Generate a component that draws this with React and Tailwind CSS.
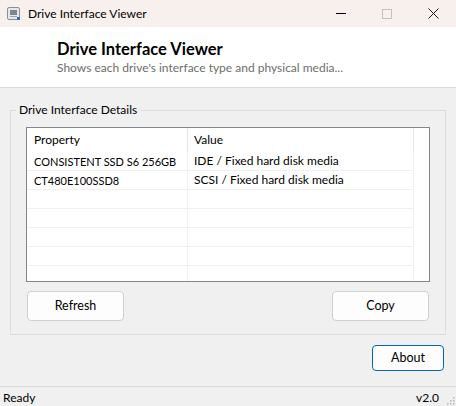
import React from 'react'

const FONT = { fontFamily: '"Segoe UI", Lato, "Noto Sans", sans-serif' }

const ROWS = [
  { prop: 'CONSISTENT SSD S6 256GB', value: 'IDE / Fixed hard disk media' },
  { prop: 'CT480E100SSD8', value: 'SCSI / Fixed hard disk media' },
  { prop: '', value: '' },
  { prop: '', value: '' },
  { prop: '', value: '' },
  { prop: '', value: '' },
  { prop: '', value: '' },
]

const AppIcon = () => (
  <svg width="14" height="14" viewBox="0 0 14 14">
    <rect x="0.5" y="0.5" width="12" height="12" rx="1.5" fill="#e4e6ea" stroke="#8a9099" />
    <rect x="3" y="3" width="7" height="5" fill="#7c8590" />
    <rect x="3" y="9" width="7" height="1" fill="#9aa2ab" />
    <rect x="10" y="10" width="3" height="3" fill="#2f6fc0" />
  </svg>
)

const SizeGrip = () => (
  <svg width="10" height="10" viewBox="0 0 10 10" className="absolute bottom-[1px] right-[1px]">
    {[
      [8, 2], [8, 5], [5, 5], [8, 8], [5, 8], [2, 8],
    ].map(([x, y], i) => (
      <rect key={i} x={x} y={y} width="1.5" height="1.5" fill="#b8b8b8" />
    ))}
  </svg>
)

const TitleBar = () => (
  <div className="flex h-[27px] items-center bg-[#f7f0ec] text-[12px] text-black">
    <div className="ml-[7px] mr-[7px] flex items-center">
      <AppIcon />
    </div>
    <span className="leading-none">Drive Interface Viewer</span>
    <div className="ml-auto flex h-full items-center">
      <div className="flex h-full w-[46px] items-center justify-center">
        <div className="h-px w-[10px] bg-black" />
      </div>
      <div className="flex h-full w-[46px] items-center justify-center">
        <div className="h-[10px] w-[10px] border border-[#c4c0be]" />
      </div>
      <div className="flex h-full w-[46px] items-center justify-center">
        <svg width="11" height="11" viewBox="0 0 11 11">
          <path d="M0.5 0.5 L10.5 10.5 M10.5 0.5 L0.5 10.5" stroke="#1a1a1a" strokeWidth="1" />
        </svg>
      </div>
    </div>
  </div>
)

const Header = () => (
  <div className="h-[61px] border-b border-[#dcdcdc] bg-white pl-[57px] pt-[12px]">
    <div className="text-[16.5px] font-bold leading-[20px] text-black">Drive Interface Viewer</div>
    <div className="mt-[1px] text-[12px] leading-[16px] text-[#6d6d6d]">
      Shows each drive's interface type and physical media...
    </div>
  </div>
)

const DriveTable = () => (
  <div className="h-[155px] overflow-hidden whitespace-nowrap border border-[#828790] bg-white text-[12px] text-black">
    <div className="flex h-[24px] items-center">
      <div className="flex h-full w-[161px] items-center border-r border-[#e5e5e5] pl-[7px]">Property</div>
      <div className="flex h-full w-[226px] items-center border-r border-[#e5e5e5] pl-[6px]">Value</div>
    </div>
    {ROWS.map((row, i) => (
      <div key={i} className="flex h-[19px] w-[387px] items-center border-b border-[#f0f0f0]">
        <div className="flex h-full w-[161px] items-center border-r border-[#f0f0f0] pl-[7px] text-[11px] leading-none">
          {row.prop}
        </div>
        <div className="flex h-full w-[226px] items-center border-r border-[#f0f0f0] pl-[6px] leading-none">
          {row.value}
        </div>
      </div>
    ))}
  </div>
)

const Button = ({ children, className = '', primary = false }) => (
  <button
    className={`flex items-center justify-center rounded-[4px] bg-[#fdfdfd] text-[12.5px] text-black ${
      primary ? 'border-[1.5px] border-[#0067c0]' : 'border border-[#d0d0d0]'
    } ${className}`}
  >
    {children}
  </button>
)

export default function App() {
  return (
    <div className="flex h-[406px] w-[456px] flex-col bg-[#f0f0f0]" style={FONT}>
      <TitleBar />
      <Header />
      <div className="relative mx-[10px] mt-[22px] h-[225px] border border-[#dcdcdc] px-[15px] pt-[16px]">
        <span className="absolute -top-[9px] left-[5px] bg-[#f0f0f0] px-[3px] text-[12px] leading-[16px] text-black">
          Drive Interface Details
        </span>
        <DriveTable />
        <div className="mt-[9px] flex justify-between px-px">
          <Button className="h-[30px] w-[97px]">Refresh</Button>
          <Button className="h-[30px] w-[97px]">Copy</Button>
        </div>
      </div>
      <div className="mt-[10px] flex justify-end pr-[12px]">
        <Button primary className="h-[26px] w-[72px]">About</Button>
      </div>
      <div className="relative mt-auto flex h-[20px] items-center border-t border-[#dadada] px-[3px] pt-[2px] text-[12px] text-black">
        <span>Ready</span>
        <span className="ml-auto mr-[14px]">v2.0</span>
        <SizeGrip />
      </div>
    </div>
  )
}
